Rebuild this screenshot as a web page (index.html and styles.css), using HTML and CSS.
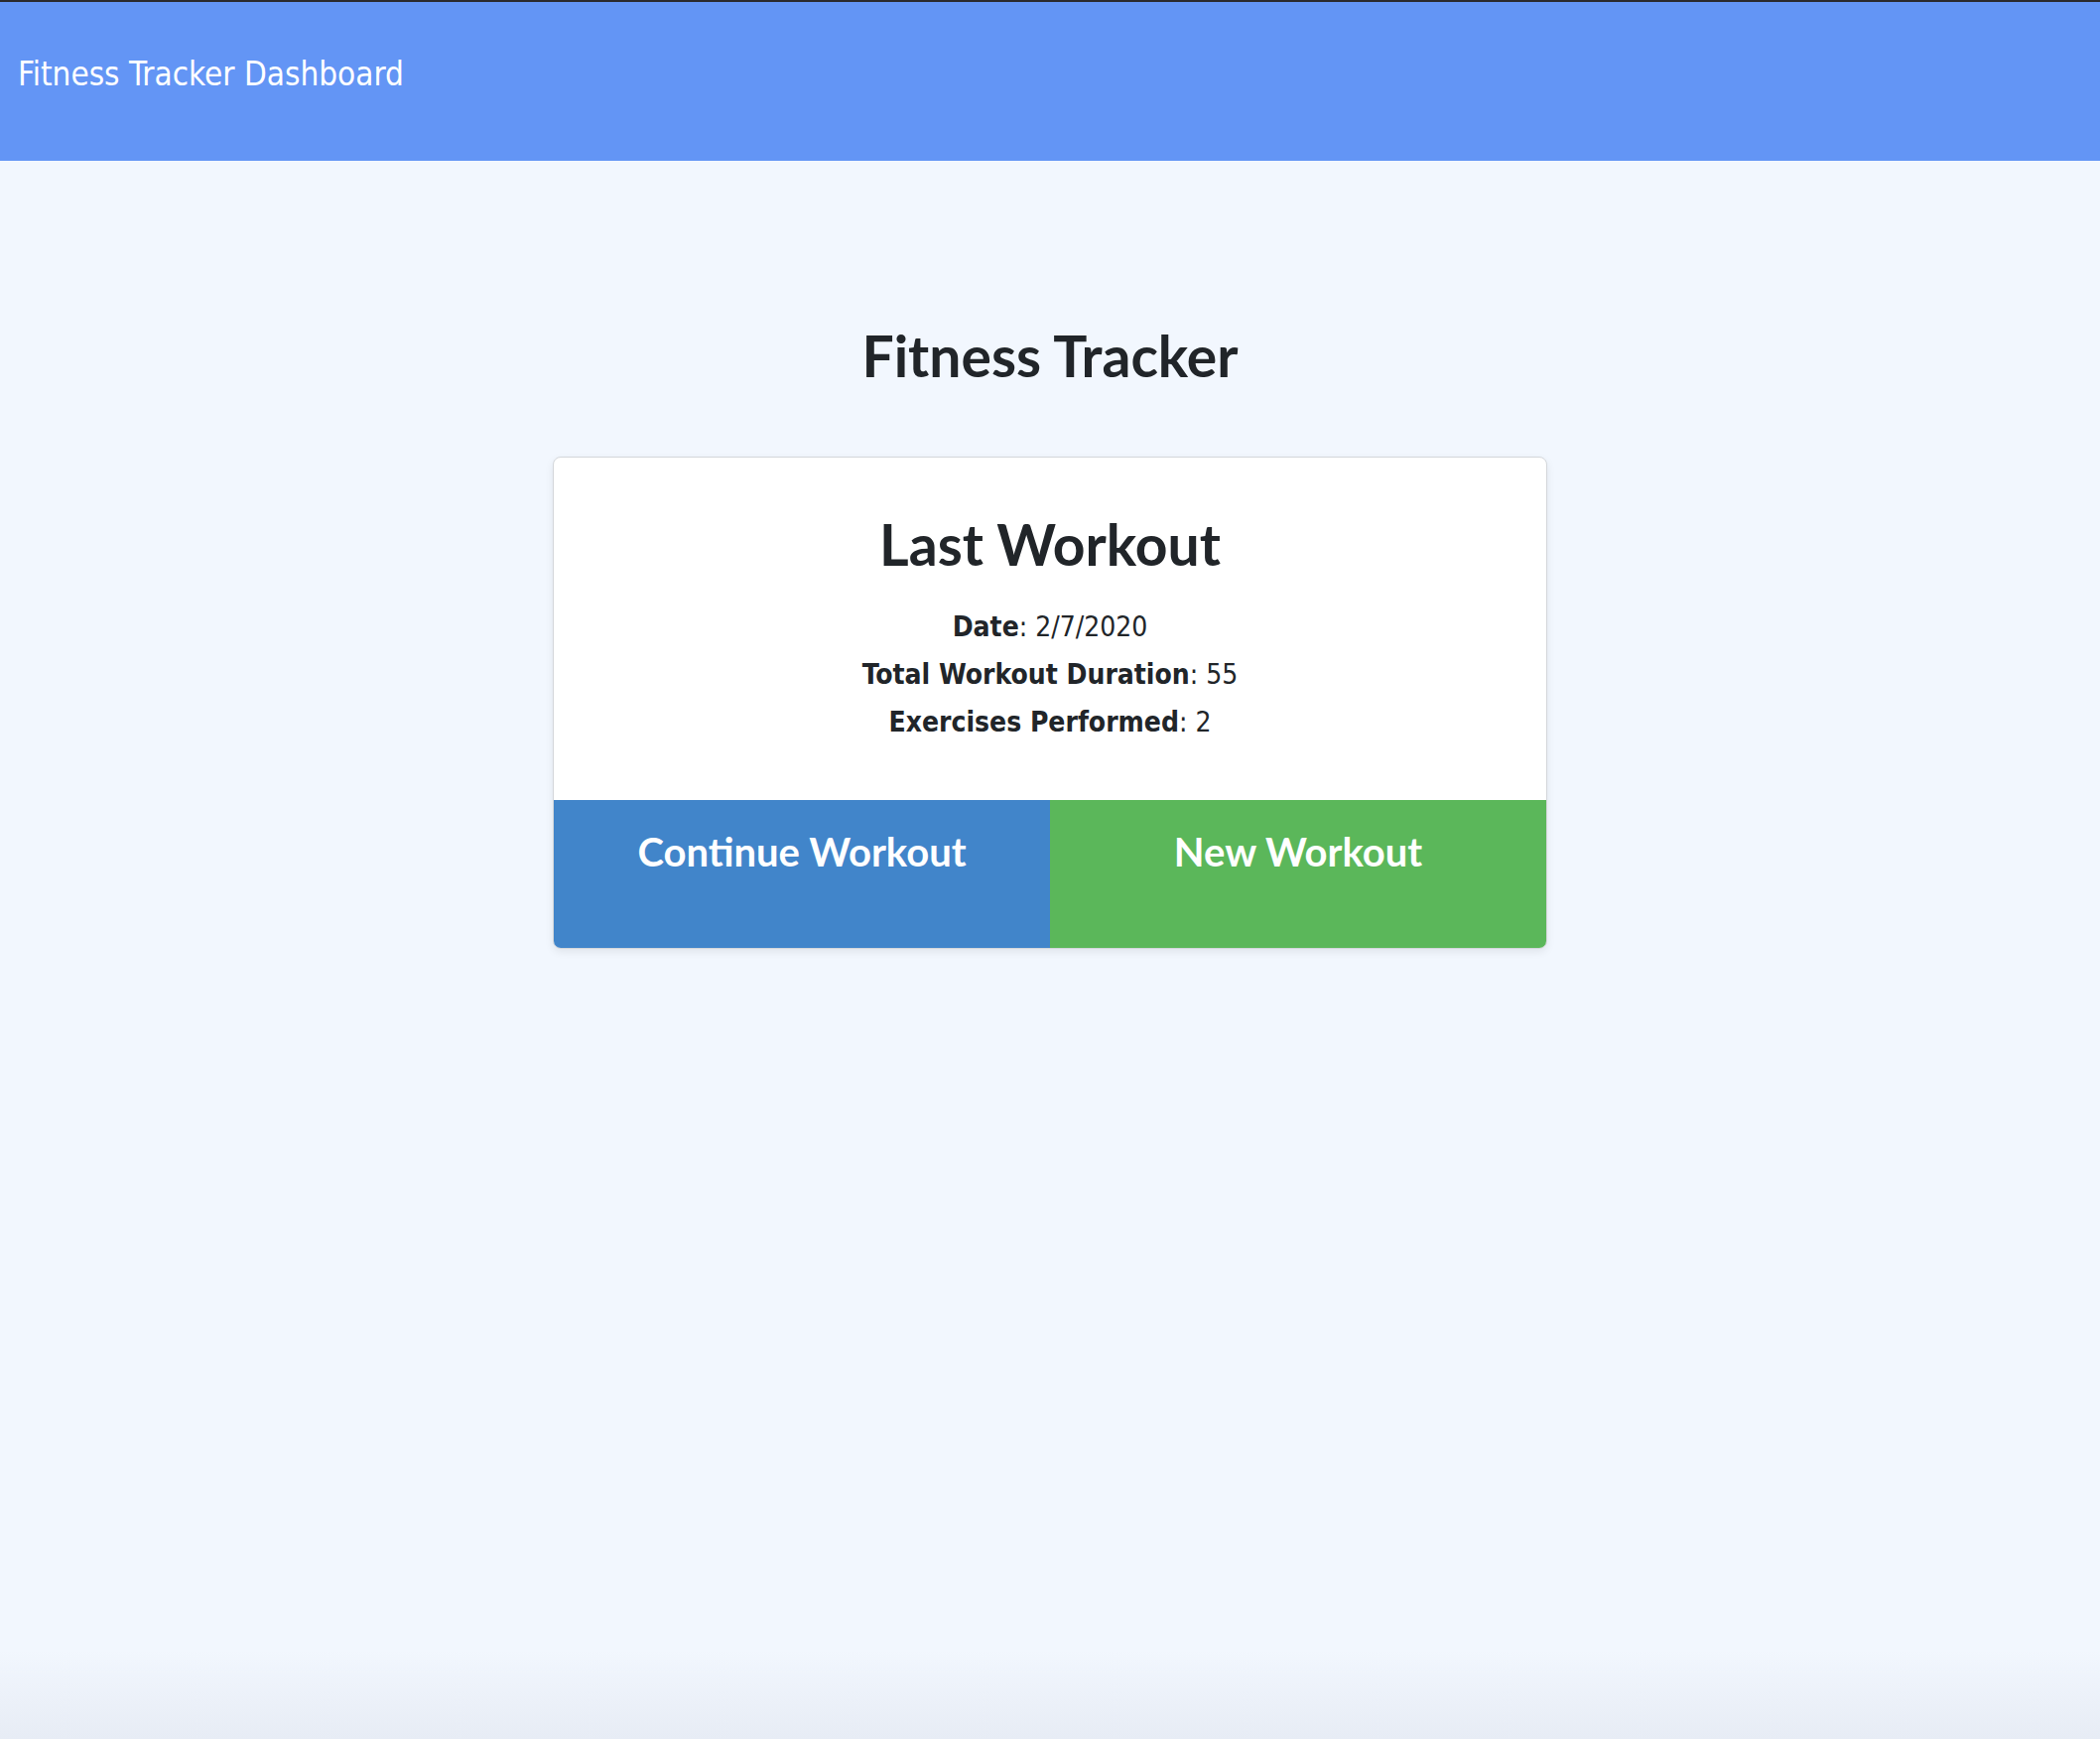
FILE: index.html
```html
<!DOCTYPE html>
<html lang="en">
<head>
  <meta charset="UTF-8" />
  <meta name="viewport" content="width=device-width, initial-scale=1"/>
  <title>Fitness Tracker</title>
  <link rel="stylesheet" href="styles.css">
</head>
<body>

  <!-- Navbar -->
  <header class="topbar">
    <span class="brand">Fitness Tracker Dashboard</span>
  </header>

  <!-- Main -->
  <main class="wrapper">
    <h1 class="page-title">Fitness Tracker</h1>

    <div class="card">
      <div class="card-body">
        <h2 class="card-title">Last Workout</h2>
        <p><strong>Date</strong>: 2/7/2020</p>
        <p><strong>Total Workout Duration</strong>: 55</p>
        <p><strong>Exercises Performed</strong>: 2</p>
      </div>
      <div class="card-actions">
        <a href="#" class="action continue">Continue Workout</a>
        <a href="#" class="action new">New Workout</a>
      </div>
    </div>
  </main>

</body>
</html>
```

FILE: styles.css
```css
/* Base */
html {
  min-height: 100%;
  background: linear-gradient(to bottom, #f2f7fe 0, #f2f7fe calc(100% - 90px), #e7ecf5 100%);
}

body {
  margin: 0;
  padding: 0;
  font-family: "DejaVu Sans Condensed", "DejaVu Sans", sans-serif;
  color: #212529;
  min-height: 1752px;
}

/* Navbar */
.topbar {
  height: 162px;
  box-sizing: border-box;
  border-top: 2px solid #2b2a2e;
  background-color: #6395f5;
  padding: 53px 18px 0;
}

.brand {
  color: #fff;
  font-size: 33px;
}

/* Main */
.wrapper {
  display: flex;
  flex-direction: column;
  align-items: center;
}

.page-title {
  font-family: Lato, sans-serif;
  font-weight: 700;
  font-size: 57px;
  line-height: 70px;
  margin: 161px 0 0;
}

.card {
  width: 1002px;
  box-sizing: border-box;
  margin-top: 67px;
  background: #fff;
  border: 1px solid #d4d7db;
  border-radius: 8px;
  box-shadow: 0 3px 8px rgba(0, 0, 0, 0.08);
  overflow: hidden;
}

.card-body {
  text-align: center;
  padding: 53px 20px 54px;
}

.card-title {
  font-family: Lato, sans-serif;
  font-weight: 700;
  font-size: 57px;
  line-height: 68px;
  margin: 0 0 26px;
}

.card-body p {
  margin: 0;
  font-size: 28px;
  line-height: 48px;
}

.card-actions {
  display: flex;
}

.action {
  flex: 1;
  height: 149px;
  box-sizing: border-box;
  padding-top: 28px;
  text-align: center;
  color: #fff;
  text-decoration: none;
  font-family: Lato, sans-serif;
  font-weight: 700;
  font-size: 40px;
  line-height: 48px;
}

.continue {
  background-color: #4185ca;
}

.new {
  background-color: #5bb75a;
}
```
